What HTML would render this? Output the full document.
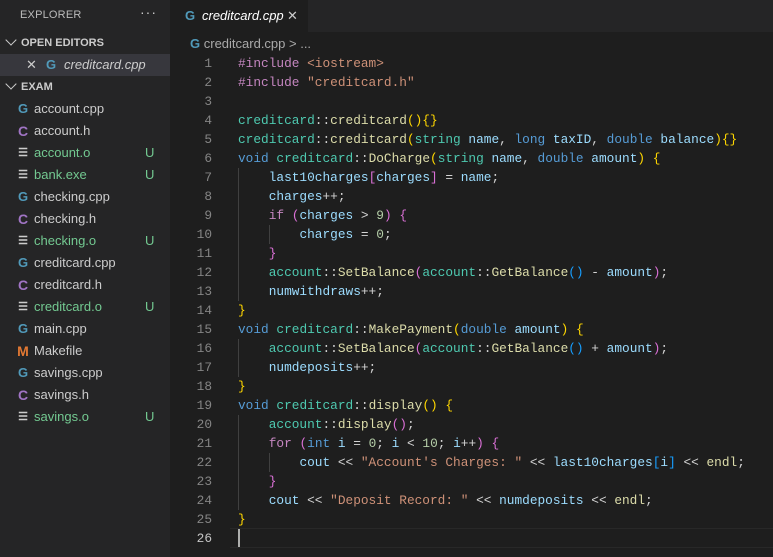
<!DOCTYPE html>
<html><head><meta charset="utf-8"><style>
*{margin:0;padding:0;box-sizing:border-box}
body{width:773px;height:557px;background:#1e1e1e;overflow:hidden;font-family:"Liberation Sans",sans-serif;position:relative}
#side{position:absolute;left:0;top:0;width:170px;height:557px;background:#252526;color:#ccc;font-size:13px}
.hdr{position:absolute;left:20px;top:9px;font-size:11px;color:#bbb;letter-spacing:.2px}
.dots{position:absolute;left:140px;top:4px;color:#ccc;font-size:14px;letter-spacing:1px}
.sec{position:absolute;left:0;width:170px;height:22px;line-height:22px;font-size:11px;font-weight:bold;color:#ccc}
.sec span.ch{display:inline-block;width:8px;height:8px;border-left:1.5px solid #ccc;border-bottom:1.5px solid #ccc;transform:rotate(-45deg);margin:0 6px 2px 7px}
.row{position:absolute;left:0;width:170px;height:22px;line-height:22px;white-space:nowrap}
.ic{position:absolute;left:16px;top:0;width:14px;text-align:center;font-weight:bold}
.nm{position:absolute;left:34px}
.u{position:absolute;left:145px;color:#73c991}
.g{color:#73c991}
.cpp{color:#519aba;font-size:13px}
.h{color:#a074c4;font-size:14px}
.m{color:#e37933;font-size:14px}
.o{color:#ccc;font-size:11px}
#tabs{position:absolute;left:170px;top:0;width:603px;height:32px;background:#252526}
.tab{position:absolute;left:0;top:0;width:138px;height:32px;background:#1e1e1e;color:#fff;font-style:italic;font-size:13px;line-height:32px}
#bc{position:absolute;left:190px;top:36px;font-size:13px;color:#a9a9a9}
#code{position:absolute;left:0;top:54px;font-family:"Liberation Mono",monospace;font-size:12.8px;white-space:pre;color:#d4d4d4}
.ln{position:absolute;left:180px;width:32px;text-align:right;color:#858585;height:19px;line-height:19px}
.cl{position:absolute;left:238px;height:19px;line-height:19px}
.k{color:#569cd6}.t{color:#4ec9b0}.f{color:#dcdcaa}.v{color:#9cdcfe}.s{color:#ce9178}.p{color:#c586c0}.n{color:#b5cea8}
.b1{color:#ffd700}.b2{color:#da70d6}.b3{color:#179fff}
.guide{position:absolute;width:1px;background:#404040}
</style></head><body>
<div id="side">
<div class="hdr">EXPLORER</div><div class="dots">···</div>
<div class="sec" style="top:32px"><span class="ch"></span>OPEN EDITORS</div>
<div class="row" style="top:54px;background:#37373d"><span style="position:absolute;left:26px;color:#ccc">✕</span><span class="cpp" style="position:absolute;left:46px;font-weight:bold">G</span><span style="position:absolute;left:64px;font-style:italic">creditcard.cpp</span></div>
<div class="sec" style="top:76px"><span class="ch"></span>EXAM</div>
<div class="row" style="top:98px"><span class="ic cpp">G</span><span class="nm">account.cpp</span></div>
<div class="row" style="top:120px"><span class="ic h">C</span><span class="nm">account.h</span></div>
<div class="row" style="top:142px"><span class="ic o">☰</span><span class="nm g">account.o</span><span class="u">U</span></div>
<div class="row" style="top:164px"><span class="ic o">☰</span><span class="nm g">bank.exe</span><span class="u">U</span></div>
<div class="row" style="top:186px"><span class="ic cpp">G</span><span class="nm">checking.cpp</span></div>
<div class="row" style="top:208px"><span class="ic h">C</span><span class="nm">checking.h</span></div>
<div class="row" style="top:230px"><span class="ic o">☰</span><span class="nm g">checking.o</span><span class="u">U</span></div>
<div class="row" style="top:252px"><span class="ic cpp">G</span><span class="nm">creditcard.cpp</span></div>
<div class="row" style="top:274px"><span class="ic h">C</span><span class="nm">creditcard.h</span></div>
<div class="row" style="top:296px"><span class="ic o">☰</span><span class="nm g">creditcard.o</span><span class="u">U</span></div>
<div class="row" style="top:318px"><span class="ic cpp">G</span><span class="nm">main.cpp</span></div>
<div class="row" style="top:340px"><span class="ic m">M</span><span class="nm">Makefile</span></div>
<div class="row" style="top:362px"><span class="ic cpp">G</span><span class="nm">savings.cpp</span></div>
<div class="row" style="top:384px"><span class="ic h">C</span><span class="nm">savings.h</span></div>
<div class="row" style="top:406px"><span class="ic o">☰</span><span class="nm g">savings.o</span><span class="u">U</span></div>
</div>
<div id="tabs"><div class="tab"><span class="cpp" style="position:absolute;left:15px;font-style:normal;font-weight:bold">G</span><span style="position:absolute;left:32px">creditcard.cpp</span><span style="position:absolute;left:117px;font-style:normal;color:#ccc">✕</span></div></div>
<div id="bc"><span class="cpp" style="font-weight:bold">G</span> creditcard.cpp &gt; ...</div>
<div style="position:absolute;left:230px;top:528px;width:543px;height:20px;border-top:1px solid #282828;border-bottom:1px solid #282828"></div>
<div class="guide" style="left:238px;top:168px;height:133px"></div>
<div class="guide" style="left:238px;top:339px;height:38px"></div>
<div class="guide" style="left:238px;top:415px;height:95px"></div>
<div class="guide" style="left:269px;top:453px;height:19px"></div>
<div class="guide" style="left:269px;top:225px;height:19px"></div>
<div style="position:absolute;left:238px;top:529px;width:2px;height:18px;background:#aeafad"></div>
<div id="code">
<div class="ln" style="top:0">1</div><div class="cl" style="top:0"><span class="p">#include</span> <span class="s">&lt;iostream&gt;</span></div>
<div class="ln" style="top:19px">2</div><div class="cl" style="top:19px"><span class="p">#include</span> <span class="s">"creditcard.h"</span></div>
<div class="ln" style="top:38px">3</div>
<div class="ln" style="top:57px">4</div><div class="cl" style="top:57px"><span class="t">creditcard</span>::<span class="f">creditcard</span><span class="b1">(){}</span></div>
<div class="ln" style="top:76px">5</div><div class="cl" style="top:76px"><span class="t">creditcard</span>::<span class="f">creditcard</span><span class="b1">(</span><span class="t">string</span> <span class="v">name</span>, <span class="k">long</span> <span class="v">taxID</span>, <span class="k">double</span> <span class="v">balance</span><span class="b1">){}</span></div>
<div class="ln" style="top:95px">6</div><div class="cl" style="top:95px"><span class="k">void</span> <span class="t">creditcard</span>::<span class="f">DoCharge</span><span class="b1">(</span><span class="t">string</span> <span class="v">name</span>, <span class="k">double</span> <span class="v">amount</span><span class="b1">)</span> <span class="b1">{</span></div>
<div class="ln" style="top:114px">7</div><div class="cl" style="top:114px">    <span class="v">last10charges</span><span class="b2">[</span><span class="v">charges</span><span class="b2">]</span> = <span class="v">name</span>;</div>
<div class="ln" style="top:133px">8</div><div class="cl" style="top:133px">    <span class="v">charges</span>++;</div>
<div class="ln" style="top:152px">9</div><div class="cl" style="top:152px">    <span class="p">if</span> <span class="b2">(</span><span class="v">charges</span> &gt; <span class="n">9</span><span class="b2">)</span> <span class="b2">{</span></div>
<div class="ln" style="top:171px">10</div><div class="cl" style="top:171px">        <span class="v">charges</span> = <span class="n">0</span>;</div>
<div class="ln" style="top:190px">11</div><div class="cl" style="top:190px">    <span class="b2">}</span></div>
<div class="ln" style="top:209px">12</div><div class="cl" style="top:209px">    <span class="t">account</span>::<span class="f">SetBalance</span><span class="b2">(</span><span class="t">account</span>::<span class="f">GetBalance</span><span class="b3">()</span> - <span class="v">amount</span><span class="b2">)</span>;</div>
<div class="ln" style="top:228px">13</div><div class="cl" style="top:228px">    <span class="v">numwithdraws</span>++;</div>
<div class="ln" style="top:247px">14</div><div class="cl" style="top:247px"><span class="b1">}</span></div>
<div class="ln" style="top:266px">15</div><div class="cl" style="top:266px"><span class="k">void</span> <span class="t">creditcard</span>::<span class="f">MakePayment</span><span class="b1">(</span><span class="k">double</span> <span class="v">amount</span><span class="b1">)</span> <span class="b1">{</span></div>
<div class="ln" style="top:285px">16</div><div class="cl" style="top:285px">    <span class="t">account</span>::<span class="f">SetBalance</span><span class="b2">(</span><span class="t">account</span>::<span class="f">GetBalance</span><span class="b3">()</span> + <span class="v">amount</span><span class="b2">)</span>;</div>
<div class="ln" style="top:304px">17</div><div class="cl" style="top:304px">    <span class="v">numdeposits</span>++;</div>
<div class="ln" style="top:323px">18</div><div class="cl" style="top:323px"><span class="b1">}</span></div>
<div class="ln" style="top:342px">19</div><div class="cl" style="top:342px"><span class="k">void</span> <span class="t">creditcard</span>::<span class="f">display</span><span class="b1">()</span> <span class="b1">{</span></div>
<div class="ln" style="top:361px">20</div><div class="cl" style="top:361px">    <span class="t">account</span>::<span class="f">display</span><span class="b2">()</span>;</div>
<div class="ln" style="top:380px">21</div><div class="cl" style="top:380px">    <span class="p">for</span> <span class="b2">(</span><span class="k">int</span> <span class="v">i</span> = <span class="n">0</span>; <span class="v">i</span> &lt; <span class="n">10</span>; <span class="v">i</span>++<span class="b2">)</span> <span class="b2">{</span></div>
<div class="ln" style="top:399px">22</div><div class="cl" style="top:399px">        <span class="v">cout</span> &lt;&lt; <span class="s">"Account's Charges: "</span> &lt;&lt; <span class="v">last10charges</span><span class="b3">[</span><span class="v">i</span><span class="b3">]</span> &lt;&lt; <span class="f">endl</span>;</div>
<div class="ln" style="top:418px">23</div><div class="cl" style="top:418px">    <span class="b2">}</span></div>
<div class="ln" style="top:437px">24</div><div class="cl" style="top:437px">    <span class="v">cout</span> &lt;&lt; <span class="s">"Deposit Record: "</span> &lt;&lt; <span class="v">numdeposits</span> &lt;&lt; <span class="f">endl</span>;</div>
<div class="ln" style="top:456px">25</div><div class="cl" style="top:456px"><span class="b1">}</span></div>
<div class="ln" style="top:475px;color:#c6c6c6">26</div>
</div>
</body></html>
